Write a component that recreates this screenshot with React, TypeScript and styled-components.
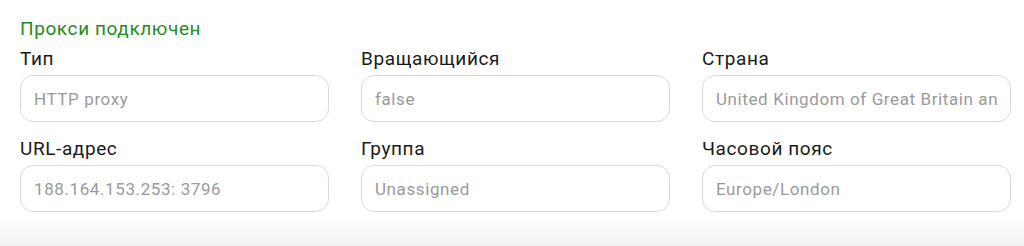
import React from "react";
import styled, { createGlobalStyle } from "styled-components";

const GlobalStyle = createGlobalStyle`
  html, body {
    margin: 0;
    padding: 0;
    background: #ffffff;
  }
  body {
    font-family: Roboto, "Noto Sans", "Liberation Sans", sans-serif;
    -webkit-font-smoothing: antialiased;
  }
`;

const fields = [
  { label: "Тип", value: "HTTP proxy" },
  { label: "Вращающийся", value: "false" },
  { label: "Страна", value: "United Kingdom of Great Britain and Northern Ireland" },
  { label: "URL-адрес", value: "188.164.153.253: 3796" },
  { label: "Группа", value: "Unassigned" },
  { label: "Часовой пояс", value: "Europe/London" },
];

const App = () => {
  return (
    <>
      <GlobalStyle />
      <Panel>
        <Status>Прокси подключен</Status>
        <FieldGrid>
          {fields.map((f) => (
            <Field key={f.label}>
              <Label>{f.label}</Label>
              <InputBox>
                <InputText>{f.value}</InputText>
              </InputBox>
            </Field>
          ))}
        </FieldGrid>
      </Panel>
      <Shade />
    </>
  );
};

const Panel = styled.div`
  display: flex;
  flex-direction: column;
  gap: 6px;
  padding: 17px 13px 4px 20px;
  background: #ffffff;
`;

const Status = styled.div`
  color: #1f8c1f;
  font-size: 19px;
  letter-spacing: 0.6px;
  line-height: 24px;
`;

const FieldGrid = styled.div`
  display: grid;
  grid-template-columns: repeat(3, 309px);
  column-gap: 32px;
  row-gap: 15px;
`;

const Field = styled.div`
  display: flex;
  flex-direction: column;
  gap: 4px;
`;

const Label = styled.div`
  color: #1a1a1a;
  font-size: 19px;
  letter-spacing: 0.6px;
  line-height: 24px;
`;

const InputBox = styled.div`
  box-sizing: border-box;
  height: 47px;
  display: flex;
  align-items: center;
  padding: 0 13px;
  border: 1.5px solid #d9d9d9;
  border-radius: 13px;
  background: #ffffff;
  overflow: hidden;
`;

const InputText = styled.span`
  color: #9a9a9a;
  font-size: 17px;
  letter-spacing: 0.6px;
  line-height: 20px;
  white-space: nowrap;
  overflow: hidden;
`;

const Shade = styled.div`
  height: 30px;
  background: linear-gradient(#ffffff, #f1f1f1);
`;

export default App;
